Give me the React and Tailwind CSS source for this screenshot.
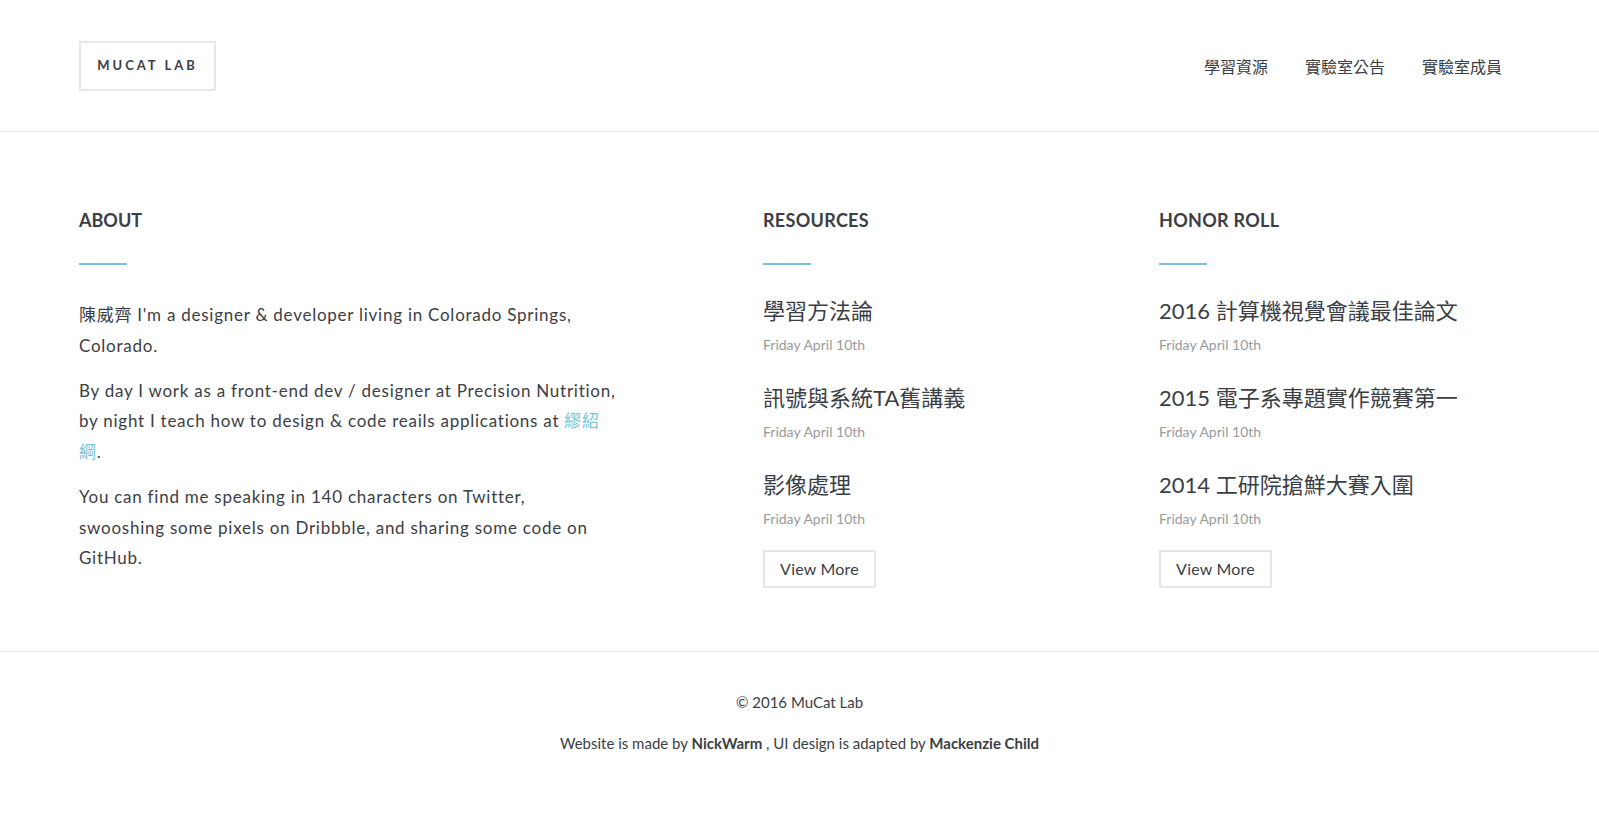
import React from 'react';

const resources = ['學習方法論', '訊號與系統TA舊講義', '影像處理'];
const honors = ['2016 計算機視覺會議最佳論文', '2015 電子系專題實作競賽第一', '2014 工研院搶鮮大賽入圍'];

const PostList = ({ title, items }) => (
    <div>
        <h2 className="text-[18px] leading-[22px] font-bold tracking-[0.3px]">{title}</h2>
        <div className="mt-[32px] w-[48px] h-[2px] bg-[#7ac3d6]"></div>
        <ul className="mt-[31px]">
            {items.map((item) => (
                <li key={item} className="mb-[27px]">
                    <h3 className="text-[22px] leading-[30px]">{item}</h3>
                    <p className="mt-[8px] text-[14px] leading-[22px] text-[#9a9a9a]">Friday April 10th</p>
                </li>
            ))}
        </ul>
        <button className="-mt-[8px] w-[113px] h-[38px] border-2 border-[#e6e6e6] text-[16px] tracking-[0.2px]">View More</button>
    </div>
);

const App = () => {
    return (
        <div className="min-h-screen bg-white text-[#3b3e45] font-['Lato','Noto_Sans_CJK_TC',sans-serif]">
            {/* Header */}
            <header className="h-[132px] border-b border-[#e8e8e8] pl-[79px] pr-[97px] flex items-center justify-between">
                <div className="w-[137px] h-[50px] border-2 border-[#e6e6e6] flex items-center justify-center text-[13px] font-bold tracking-[3px]">
                    MUCAT LAB
                </div>
                <nav className="flex gap-[37px] text-[16px] mt-[2px]">
                    <a href="#">學習資源</a>
                    <a href="#">實驗室公告</a>
                    <a href="#">實驗室成員</a>
                </nav>
            </header>

            {/* Main */}
            <main className="pl-[79px] pt-[77px] pb-[63px] border-b border-[#e8e8e8] flex">
                <div className="w-[684px]">
                    <div className="w-[541px]">
                        <h2 className="text-[18px] leading-[22px] font-bold">ABOUT</h2>
                        <div className="mt-[32px] w-[48px] h-[2px] bg-[#7ac3d6]"></div>
                        <div className="mt-[35px] text-[17px] leading-[1.8] tracking-[0.75px]">
                            <p className="mb-[14.5px]">陳威齊 I'm a designer &amp; developer living in Colorado Springs, Colorado.</p>
                            <p className="mb-[14.5px]">
                                By day I work as a front-end dev / designer at Precision Nutrition, by night I teach how to design &amp; code reails applications at <a href="#" className="text-[#7ac3d6]">繆紹綱</a>.
                            </p>
                            <p>
                                You can find me speaking in 140 characters on Twitter,<br />
                                swooshing some pixels on Dribbble, and sharing some code on GitHub.
                            </p>
                        </div>
                    </div>
                </div>
                <div className="w-[396px]">
                    <PostList title="RESOURCES" items={resources} />
                </div>
                <div>
                    <PostList title="HONOR ROLL" items={honors} />
                </div>
            </main>

            {/* Footer */}
            <footer className="pt-[40px] text-center text-[15px] leading-[20px]">
                <p>© 2016 MuCat Lab</p>
                <p className="mt-[21px]">
                    Website is made by <b>NickWarm</b> , UI design is adapted by <b>Mackenzie Child</b>
                </p>
            </footer>
        </div>
    );
};

export default App;
